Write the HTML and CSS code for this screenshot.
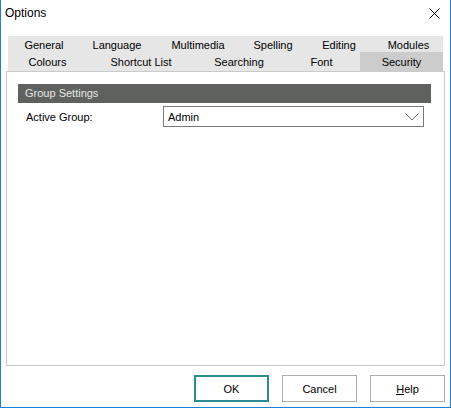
FILE: index.html
```html
<!DOCTYPE html>
<html>
<head>
<meta charset="utf-8">
<link rel="stylesheet" href="styles.css">
</head>
<body>
<div class="window">
  <div class="titlebar">
    <span class="title">Options</span>
    <svg class="close" width="11" height="11" viewBox="0 0 11 11"><path d="M0.5 0.5 L10.5 10.5 M10.5 0.5 L0.5 10.5" stroke="#000" stroke-width="1" fill="none"/></svg>
  </div>
  <div class="tabs">
    <div class="tabrow row1">
      <div class="tab">General</div>
      <div class="tab">Language</div>
      <div class="tab">Multimedia</div>
      <div class="tab">Spelling</div>
      <div class="tab">Editing</div>
      <div class="tab">Modules</div>
    </div>
    <div class="tabrow row2">
      <div class="tab">Colours</div>
      <div class="tab">Shortcut List</div>
      <div class="tab">Searching</div>
      <div class="tab">Font</div>
      <div class="tab selected">Security</div>
    </div>
  </div>
  <div class="panel">
    <div class="group-header">Group Settings</div>
    <div class="field">
      <span class="label">Active Group:</span>
      <div class="combo">
        <span class="combo-text">Admin</span>
        <svg class="chev" width="14" height="8" viewBox="0 0 14 8"><path d="M0.5 0.5 L7 7 L13.5 0.5" stroke="#6d6d6d" stroke-width="1" fill="none"/></svg>
      </div>
    </div>
  </div>
  <div class="buttons">
    <button class="btn default">OK</button>
    <button class="btn">Cancel</button>
    <button class="btn"><u>H</u>elp</button>
  </div>
</div>
</body>
</html>
```
FILE: styles.css
```css
html, body {
  margin: 0;
  padding: 0;
  background: #ffffff;
}
body {
  font-family: "Liberation Sans", Arial, sans-serif;
  font-size: 11px;
  color: #000;
}
.window {
  width: 451px;
  height: 408px;
  box-sizing: border-box;
  border-left: 1px solid #1a7fd6;
  border-right: 1px solid #1a7fd6;
  border-bottom: 1px solid #1a7fd6;
  background: #fff;
  display: flex;
  flex-direction: column;
}
.titlebar {
  height: 36px;
  box-sizing: border-box;
  display: flex;
  justify-content: space-between;
  align-items: flex-start;
  padding: 6px 10px 0 4px;
}
.title {
  font-size: 12px;
  line-height: 15px;
}
.close {
  margin-top: 2px;
}
.tabs {
  margin-left: 7px;
  width: 435px;
  background: #e6e6e6;
}
.tabrow {
  display: grid;
}
.row1 {
  height: 16px;
  grid-template-columns: 72px 74px 88px 62px 70px 69px;
}
.row2 {
  height: 19px;
  grid-template-columns: 79px 108px 88px 77px 83px;
}
.tab {
  text-align: center;
  white-space: nowrap;
}
.row1 .tab {
  line-height: 16px;
  padding-top: 1px;
}
.row2 .tab {
  line-height: 19px;
  padding-top: 1px;
  box-sizing: border-box;
}
.tab.selected {
  background: #cccccc;
}
.panel {
  margin-left: 5px;
  width: 439px;
  height: 295px;
  box-sizing: border-box;
  border: 1px solid #cacaca;
  padding: 12px 0 0 11px;
}
.group-header {
  width: 413px;
  height: 19px;
  box-sizing: border-box;
  background: #5f615f;
  color: #e6e6e6;
  padding-left: 7px;
  line-height: 19px;
}
.field {
  display: flex;
  align-items: center;
  margin-top: 3px;
  padding-left: 8px;
}
.label {
  width: 137px;
}
.combo {
  width: 261px;
  height: 21px;
  box-sizing: border-box;
  border: 1px solid #7a7a7a;
  display: flex;
  align-items: center;
  justify-content: space-between;
  padding: 0 4px 0 4px;
}
.chev {
  margin-top: 1px;
}
.buttons {
  display: flex;
  justify-content: flex-end;
  gap: 13px;
  padding-right: 5px;
  margin-top: 9px;
}
.btn {
  width: 75px;
  height: 27px;
  box-sizing: border-box;
  background: #fff;
  border: 1px solid #adadad;
  font-family: "Liberation Sans", Arial, sans-serif;
  font-size: 11px;
  color: #000;
  padding: 0;
  margin: 0;
}
.btn.default {
  border: 2px solid #2b8d8d;
}
```
